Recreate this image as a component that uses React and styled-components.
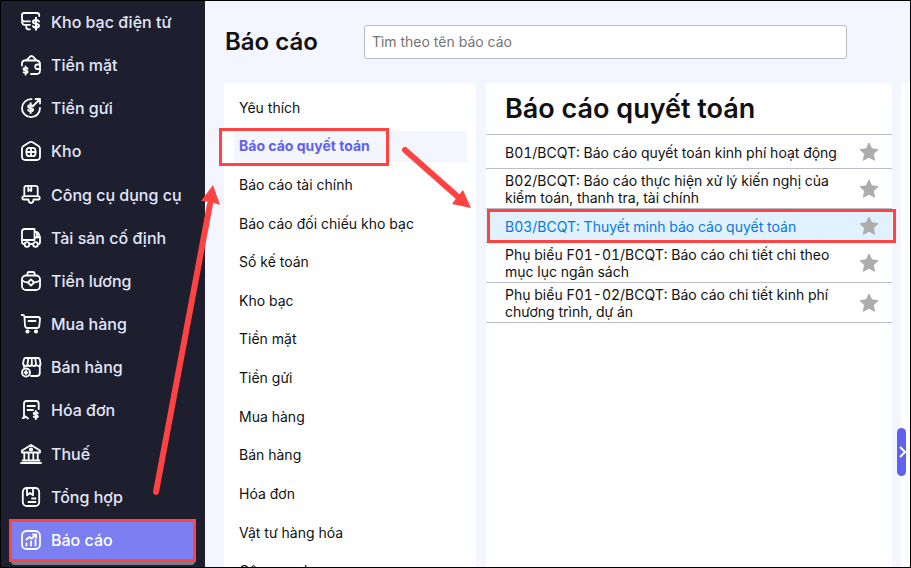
import React from "react";
import styled, { createGlobalStyle } from "styled-components";

const RED = "#ff4343";

const GlobalStyle = createGlobalStyle`
  * { box-sizing: border-box; }
  body { margin: 0; font-family: Inter, "Liberation Sans", sans-serif; color: #111; }
  ul { list-style: none; margin: 0; padding: 0; }
  h1, h2 { margin: 0; font-weight: 600; }
`;

const Frame = styled.div`
  position: relative;
  display: flex;
  height: 100vh;
  border: 1px solid #000;
  background: #f3f5ff;
  overflow: hidden;
`;

const Sidebar = styled.nav`
  flex: none;
  width: 204px;
  padding: 1px 10px 7px;
  background: #1e1f2e;
`;

const MenuList = styled.ul`
  display: flex;
  flex-direction: column;
  justify-content: space-between;
  height: 100%;
`;

const MenuItem = styled.li`
  position: relative;
`;

const MenuLink = styled.a`
  display: flex;
  align-items: center;
  gap: 10px;
  height: 40px;
  padding: 0 10px;
  border-radius: 4px;
  font-size: 16px;
  font-weight: 500;
  line-height: 20px;
  color: ${(p) => (p.$active ? "#fff" : "#e3e6fa")};
  background: ${(p) => (p.$active ? "#7b7ff2" : "transparent")};
  box-shadow: ${(p) => (p.$active ? "0 5px 0 #7b7c8a" : "none")};
  text-decoration: none;
  white-space: nowrap;
`;

const MenuIcon = styled.svg`
  flex: none;
  width: 20px;
  height: 20px;
  fill: none;
  stroke: #fff;
  stroke-width: 1.8;
  stroke-linecap: round;
  stroke-linejoin: round;
  overflow: visible;
`;

const Main = styled.main`
  flex: 1;
  min-width: 0;
  display: flex;
  flex-direction: column;
`;

const Header = styled.header`
  flex: none;
  display: flex;
  align-items: center;
  gap: 46px;
  height: 82px;
  padding: 0 63px 0 20px;
`;

const PageTitle = styled.h1`
  font-size: 24px;
  line-height: 30px;
`;

const Search = styled.input`
  flex: 1;
  min-width: 0;
  height: 34px;
  padding: 0 7px 2px;
  border: 1px solid #babcc8;
  border-radius: 3px;
  background: #fff;
  font: 400 14px/20px Inter, "Liberation Sans", sans-serif;
  &::placeholder { color: #757575; opacity: 1; }
`;

const Columns = styled.div`
  flex: 1;
  min-height: 0;
  display: flex;
  gap: 10px;
  padding-left: 19px;
`;

const CategoryPanel = styled.section`
  flex: none;
  width: 252px;
  display: flex;
  flex-direction: column;
  padding: 6px 9px 0 10px;
  background: #fff;
  overflow-x: visible;
  overflow-y: clip;
`;

const CategoryList = styled.ul`
  flex: 1;
  display: flex;
  flex-direction: column;
  margin-bottom: -24px;
`;

const CategoryItem = styled.li`
  position: relative;
  flex: 1;
  display: flex;
  align-items: center;
`;

const CategoryLink = styled.a`
  flex: 1;
  padding: 5px 5px 6px;
  font-size: 14px;
  line-height: 20px;
  font-weight: ${(p) => (p.$active ? 700 : 400)};
  color: ${(p) => (p.$active ? "#5f61ee" : "#111")};
  background: ${(p) => (p.$active ? "#f3f5ff" : "transparent")};
  text-decoration: none;
`;

const ReportPanel = styled.section`
  flex: 1;
  min-width: 0;
  background: #fff;
`;

const ReportTitle = styled.h2`
  padding: 9px 19px;
  border-bottom: 1px solid #babcc8;
  font-size: 27px;
  line-height: 33px;
`;

const ReportRow = styled.li`
  position: relative;
  display: flex;
  align-items: center;
  justify-content: space-between;
  gap: 8px;
  min-height: 34px;
  padding: 3px 13px 2px 19px;
  border-bottom: 1px solid #babcc8;
  background: ${(p) => (p.$active ? "#e0f1ff" : "#fff")};
`;

const ReportLink = styled.a`
  font-size: 14px;
  line-height: 17px;
  font-variant-numeric: tabular-nums;
  color: ${(p) => (p.$active ? "#0a78dc" : "#111")};
  text-decoration: none;
`;

const StarButton = styled.button`
  flex: none;
  display: flex;
  padding: 0;
  border: 0;
  background: none;
  svg { width: 20px; height: 20px; fill: #adadad; stroke: #adadad; stroke-linejoin: round; }
`;

const NextPanel = styled.section`
  position: relative;
  flex: none;
  width: 9px;
  margin-left: -1px;
  background: #fff;
`;

const PanelHandle = styled.button`
  position: absolute;
  bottom: 91px;
  left: -4px;
  display: grid;
  place-items: center;
  width: 9px;
  height: 48px;
  padding: 0;
  border: 0;
  border-radius: 5px;
  background: #6062ee;
  svg { width: 8px; height: 14px; fill: none; stroke: #fff; stroke-width: 2; }
`;

const Marker = styled.span`
  position: absolute;
  inset: ${(p) => p.$inset};
  border: 3px solid ${RED};
  pointer-events: none;
  z-index: 1;
`;

const Arrows = styled.svg`
  position: absolute;
  top: -1px;
  left: -1px;
  width: 911px;
  height: 568px;
  fill: ${RED};
  stroke: ${RED};
  stroke-width: 6;
  stroke-linecap: round;
  pointer-events: none;
`;

function Dollar({ x, y, s = 1, w = 1.6 }) {
  return (
    <path
      transform={`translate(${x} ${y}) scale(${s})`}
      strokeWidth={w / s}
      d="M3-2.4C2.5-3.4 1.4-3.7 0-3.7C-1.9-3.7-3-2.9-3-1.9C-3 .5 3-.5 3 1.9C3 2.9 1.9 3.7 0 3.7C-1.4 3.7-2.5 3.4-3 2.4M0-6V6"
    />
  );
}

const menu = [
  ["Kho bạc điện tử", <><path d="M18.2 4V3.3Q18.2 1 16 1H3.2Q1 1 1 3.3V7Q1 9.3 3.2 9.3H9M1 9.3Q1 12.8 3.5 12.8H9M5.3 13V15Q5.3 17.3 7.3 17.3H9" /><Dollar x={15} y={11.8} w={2} /></>],
  ["Tiền mặt", <><path d="M1 10.5V8.5Q1 6 3.5 5.5Q6.2 5.4 7.5 3.2Q9 1 10.5 1T13.5 3.2Q14.5 4.6 16 5.5Q19 6 19 9M4.5 5.5H16M19 9.5H16.5Q14.2 9.5 14.2 11.8T16.5 14H19V9.5M19 14V15.5Q19 19 15.5 19H10" /><Dollar x={4.6} y={15.5} s={0.7} w={1.8} /></>],
  ["Tiền gửi", <><path d="M10.5 1.2A9 9 0 1 0 19 10M12.5 7.5L18.5 1.5M14.5 1H19V5.5" /><Dollar x={9.6} y={10.2} s={0.82} w={2} /></>],
  ["Kho", <><path d="M1 7.5Q1 6 2.5 5L8 1.6Q10 .3 12 1.6L17.5 5Q19 6 19 7.5V15.5Q19 19 15.5 19H4.5Q1 19 1 15.5Z" /><rect x="5.5" y="6.8" width="9" height="8.4" rx="3" /><path d="M10 7V15M5.5 11H14.5" /></>],
  ["Công cụ dụng cụ", <><path d="M3.3 11V3Q3.3 .8 5.5 .8H14.5Q16.7 .8 16.7 3V11M7.3 1V6L8.8 4.8L10.3 6V1M3 11.2H17Q18.7 11.2 18.7 13T17 14.5H12.5Q12.5 18 10 18T7.5 14.5H3Q1.3 14.5 1.3 13T3 11.2Z" /></>],
  ["Tài sản cố định", <><path d="M3 16Q1 16 1 14V3.5Q1 1 3.5 1H13.5V12H1M13.5 4H15Q17 4 18 6.5L19 9V14Q19 16 17.5 16M14.5 9.5H16.5M16 4.5V9H19M9 16H11.5" /><circle cx="6" cy="16.5" r="2.3" /><circle cx="14.5" cy="16.5" r="2.3" /></>],
  ["Tiền lương", <><rect x="1" y="4.5" width="18" height="14.5" rx="4" /><path d="M6.2 4.3Q6.2 1 8 1H12Q13.8 1 13.8 4.3M1 9.5Q4 11.5 7 11.5M19 9.5Q16 11.5 13 11.5M10 8.4L13.1 11.5L10 14.6L6.9 11.5Z" /></>],
  ["Mua hàng", <><path d="M.8 1H2Q3.3 1 3.5 3L4 11.5Q4.2 14 6.5 14H16Q18 14 18.3 12L19 5Q19 3 17 3H4M7.5 7H14.5" /><circle cx="6.5" cy="17.5" r="1.2" fill="#fff" /><circle cx="15" cy="17.5" r="1.2" fill="#fff" /></>],
  ["Bán hàng", <><path d="M3 10V8M10 19H15.5Q18.8 19 18.8 16V8M4.5 1H17Q18.8 1 19 3.5L19.5 7Q19.5 9 17.5 9T15 7Q15 9 13 9T10.8 7Q10.8 9 8.7 9T6.5 7Q6.5 9 4.5 9T2 7L2.7 3Q3 1 4.5 1ZM7.5 1L6.5 7M14.2 1L15 7M10.8 1V7" /><circle cx="5" cy="15.5" r="4" /><path d="M5 14V17M3.5 15.5H6.5" /></>],
  ["Hóa đơn", <><path d="M3 18V3.5Q3 1 5.5 1H15Q17.7 1 17.7 3.5V9M1.8 18L4.5 16.5L7 18.5M6.5 6H14M6.5 10H12" /><Dollar x={14.8} y={15} s={0.7} w={1.8} /></>],
  ["Thuế", <><path d="M1 6.5L10 1L19 6.5V8.5H1ZM0 19H20M1.5 16.5H18.5M3.3 9V16M7.7 9V16M12.3 9V16M16.7 9V16" /><circle cx="10" cy="5.5" r="1.2" /></>],
  ["Tổng hợp", <><rect x="1.8" y="1" width="16.4" height="18" rx="4" /><path d="M6 1V8.3L9 6L12 8.3V1M11 11.5H14.5M7.5 15H14.5" /></>],
  ["Báo cáo", <><rect x="1" y="1" width="18" height="18" rx="4.5" /><path d="M5.5 15.5V13.5M10 15.5V11.5M14.5 15.5V9.5M5.5 9.5L8.5 7L10.5 8.5L15 4.8M12 4.5H15.2V7.5" /></>],
];

const categories = [
  "Yêu thích", "Báo cáo quyết toán", "Báo cáo tài chính", "Báo cáo đối chiếu kho bạc",
  "Sổ kế toán", "Kho bạc", "Tiền mặt", "Tiền gửi", "Mua hàng", "Bán hàng", "Hóa đơn",
  "Vật tư hàng hóa", "Công cụ dụng cụ",
];

const reports = [
  "B01/BCQT: Báo cáo quyết toán kinh phí hoạt động",
  "B02/BCQT: Báo cáo thực hiện xử lý kiến nghị của kiểm toán, thanh tra, tài chính",
  "B03/BCQT: Thuyết minh báo cáo quyết toán",
  "Phụ biểu F01-01/BCQT: Báo cáo chi tiết chi theo mục lục ngân sách",
  "Phụ biểu F01-02/BCQT: Báo cáo chi tiết kinh phí chương trình, dự án",
];

export default function App() {
  return (
    <Frame>
      <GlobalStyle />
      <Sidebar>
        <MenuList>
          {menu.map(([label, icon], i) => {
            const active = i === menu.length - 1;
            return (
              <MenuItem key={label}>
                <MenuLink href="#" $active={active}>
                  <MenuIcon viewBox="0 0 20 20" aria-hidden="true">{icon}</MenuIcon>
                  {label}
                </MenuLink>
                {active && <Marker $inset="-1px -1px -2px -2px" />}
              </MenuItem>
            );
          })}
        </MenuList>
      </Sidebar>
      <Main>
        <Header>
          <PageTitle>Báo cáo</PageTitle>
          <Search type="text" placeholder="Tìm theo tên báo cáo" aria-label="Tìm theo tên báo cáo" />
        </Header>
        <Columns>
          <CategoryPanel>
            <CategoryList>
              {categories.map((label, i) => (
                <CategoryItem key={label}>
                  <CategoryLink href="#" $active={i === 1}>{label}</CategoryLink>
                  {i === 1 && <Marker $inset="0 78px 0 -15px" />}
                </CategoryItem>
              ))}
            </CategoryList>
          </CategoryPanel>
          <ReportPanel>
            <ReportTitle>Báo cáo quyết toán</ReportTitle>
            <ul>
              {reports.map((label, i) => (
                <ReportRow key={label} $active={i === 2}>
                  <ReportLink href="#" $active={i === 2}>{label}</ReportLink>
                  <StarButton type="button" aria-label="Yêu thích">
                    <svg viewBox="0 0 20 20"><path d="M10 1L12.7 6.8L19 7.6L14.4 12L15.6 18.3L10 15.2L4.4 18.3L5.6 12L1 7.6L7.3 6.8Z" /></svg>
                  </StarButton>
                  {i === 2 && <Marker $inset="0 -4px -1px 1px" />}
                </ReportRow>
              ))}
            </ul>
          </ReportPanel>
          <NextPanel>
            <PanelHandle type="button" aria-label="Mở rộng">
              <svg viewBox="0 0 8 14"><path d="M2 2L7 7L2 12" /></svg>
            </PanelHandle>
          </NextPanel>
        </Columns>
      </Main>
      <Arrows viewBox="0 0 911 568" aria-hidden="true">
        <path d="M156 492L210 204M405 150L457 196" />
        <path stroke="none" d="M213 185L220 205L211 202L201 201ZM471 208L452 204L457 197L463 190Z" />
      </Arrows>
    </Frame>
  );
}
